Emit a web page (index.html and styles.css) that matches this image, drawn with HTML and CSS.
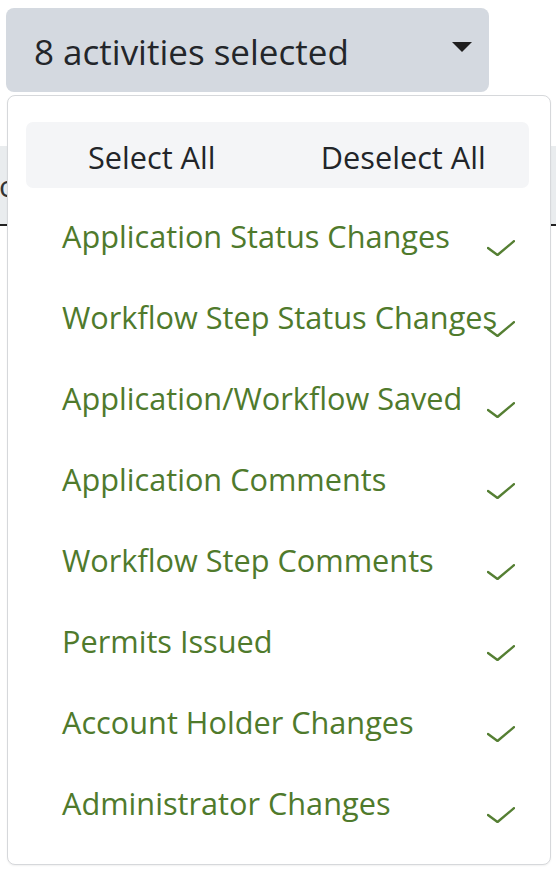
FILE: index.html
```html
<!DOCTYPE html>
<html lang="en">
<head>
<meta charset="utf-8">
<title>Activities filter</title>
<link rel="stylesheet" href="styles.css">
</head>
<body>
<div class="page">
  <button class="toggle" type="button">
    <span class="toggle-label">8 activities selected</span>
    <span class="caret"></span>
  </button>
  <div class="table-head"><span class="head-text">Co</span></div>

  <div class="menu">
    <div class="bulk">
      <button class="bulk-btn" type="button">Select All</button>
      <button class="bulk-btn" type="button">Deselect All</button>
    </div>
    <ul class="options">
      <li class="option"><span class="opt-text">Application Status Changes</span><svg class="check" viewBox="0 0 28 16" width="28" height="16"><polyline points="1,8 10.5,15 27,1.2"/></svg></li>
      <li class="option"><span class="opt-text">Workflow Step Status Changes</span><svg class="check" viewBox="0 0 28 16" width="28" height="16"><polyline points="1,8 10.5,15 27,1.2"/></svg></li>
      <li class="option"><span class="opt-text">Application/Workflow Saved</span><svg class="check" viewBox="0 0 28 16" width="28" height="16"><polyline points="1,8 10.5,15 27,1.2"/></svg></li>
      <li class="option"><span class="opt-text">Application Comments</span><svg class="check" viewBox="0 0 28 16" width="28" height="16"><polyline points="1,8 10.5,15 27,1.2"/></svg></li>
      <li class="option"><span class="opt-text">Workflow Step Comments</span><svg class="check" viewBox="0 0 28 16" width="28" height="16"><polyline points="1,8 10.5,15 27,1.2"/></svg></li>
      <li class="option"><span class="opt-text">Permits Issued</span><svg class="check" viewBox="0 0 28 16" width="28" height="16"><polyline points="1,8 10.5,15 27,1.2"/></svg></li>
      <li class="option"><span class="opt-text">Account Holder Changes</span><svg class="check" viewBox="0 0 28 16" width="28" height="16"><polyline points="1,8 10.5,15 27,1.2"/></svg></li>
      <li class="option"><span class="opt-text">Administrator Changes</span><svg class="check" viewBox="0 0 28 16" width="28" height="16"><polyline points="1,8 10.5,15 27,1.2"/></svg></li>
    </ul>
  </div>
</div>
</body>
</html>
```

FILE: styles.css
```css
* { box-sizing: border-box; }

html, body {
  margin: 0;
  padding: 0;
  background: #ffffff;
}

body {
  font-family: "Open Sans", "Noto Sans", sans-serif;
  color: #222529;
  width: 556px;
  height: 876px;
  overflow: hidden;
}

.page {
  position: relative;
  height: 876px;
  padding-top: 8px;
}

.toggle {
  display: flex;
  align-items: center;
  justify-content: space-between;
  margin-left: 6px;
  width: 483px;
  height: 84px;
  padding: 0 17px 0 28px;
  border: none;
  border-radius: 8px;
  background: #d4d9e0;
  font-family: inherit;
  font-size: 35px;
  color: #23262a;
  cursor: pointer;
}

.toggle-label {
  line-height: 1;
  padding-top: 2px;
}

.caret {
  width: 0;
  height: 0;
  border-left: 10px solid transparent;
  border-right: 10px solid transparent;
  border-top: 10px solid #1f1f1f;
  margin-top: -6px;
}

.table-head {
  margin-top: 54px;
  height: 80px;
  background: #e9ecee;
  border-bottom: 2px solid #222;
  display: flex;
  align-items: center;
  overflow: hidden;
}

.head-text {
  font-size: 30px;
  margin-left: -20px;
  color: #333;
}

.menu {
  position: absolute;
  top: 95px;
  left: 7px;
  width: 544px;
  height: 770px;
  background: #ffffff;
  border: 1px solid #d6d8db;
  border-radius: 8px;
  padding: 26px 21px 0 18px;
  box-shadow: 0 1px 2px rgba(0, 0, 0, 0.06);
}

.bulk {
  display: grid;
  grid-template-columns: 1fr 1fr;
  height: 66px;
  background: #f4f5f7;
  border-radius: 7px;
}

.bulk-btn {
  border: none;
  background: transparent;
  font-family: inherit;
  font-size: 30.7px;
  color: #222529;
  padding: 0;
  padding-top: 4px;
  cursor: pointer;
}

.options {
  list-style: none;
  margin: 8px 0 0 0;
  padding: 0 14px 0 36px;
}

.option {
  display: grid;
  grid-template-columns: minmax(0, 1fr) 28px;
  height: 81px;
  line-height: 81px;
  font-size: 30.7px;
  color: #4f7a2c;
}

.opt-text {
  white-space: nowrap;
  overflow: visible;
}

.check {
  margin-top: 44px;
  fill: none;
  stroke: #557f33;
  stroke-width: 2.4;
  stroke-linecap: round;
  stroke-linejoin: round;
}
```
